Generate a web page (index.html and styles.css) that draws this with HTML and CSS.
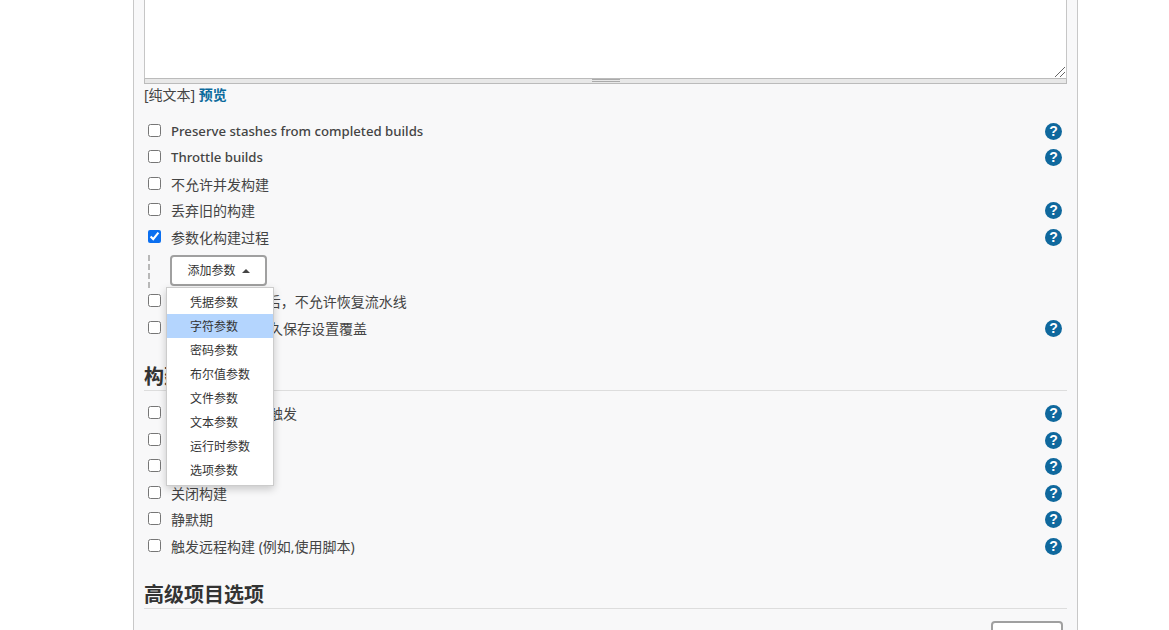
FILE: index.html
```
<!DOCTYPE html>
<html lang="zh-CN">
<head>
<meta charset="utf-8">
<title>配置</title>
<link rel="stylesheet" href="styles.css">
</head>
<body>
<main class="panel">
  <div class="editor">
    <div class="textarea"><svg class="grip" width="12" height="12" viewBox="0 0 12 12"><path d="M11 1 1 11M11 6 6 11" stroke="#666" fill="none"/></svg></div>
    <div class="drag"><span class="drag-handle"></span></div>
  </div>
  <p class="format">[纯文本] <a class="preview">预览</a></p>

  <div class="options">
    <label class="row"><input type="checkbox"><span class="label latin">Preserve stashes from completed builds</span><span class="help">?</span></label>
    <label class="row"><input type="checkbox"><span class="label latin">Throttle builds</span><span class="help">?</span></label>
    <label class="row"><input type="checkbox"><span class="label">不允许并发构建</span></label>
    <label class="row"><input type="checkbox"><span class="label">丢弃旧的构建</span><span class="help">?</span></label>
    <label class="row"><input type="checkbox" checked><span class="label">参数化构建过程</span><span class="help">?</span></label>
    <div class="nested">
      <div class="add-wrap">
        <button class="add-btn">添加参数 <span class="caret"></span></button>
        <ul class="menu">
          <li>凭据参数</li>
          <li class="active">字符参数</li>
          <li>密码参数</li>
          <li>布尔值参数</li>
          <li>文件参数</li>
          <li>文本参数</li>
          <li>运行时参数</li>
          <li>选项参数</li>
        </ul>
      </div>
    </div>
    <label class="row"><input type="checkbox"><span class="label">在 master 重启后，不允许恢复流水线</span></label>
    <label class="row"><input type="checkbox"><span class="label">流水线效率、持久保存设置覆盖</span><span class="help">?</span></label>
  </div>

  <h2 class="section first">构建触发器</h2>
  <div class="options after-section">
    <label class="row"><input type="checkbox"><span class="label">其他工程构建后触发</span><span class="help">?</span></label>
    <label class="row"><input type="checkbox"><span class="label">定时构建</span><span class="help">?</span></label>
    <label class="row"><input type="checkbox"><span class="label">轮询 SCM</span><span class="help">?</span></label>
    <label class="row"><input type="checkbox"><span class="label">关闭构建</span><span class="help">?</span></label>
    <label class="row"><input type="checkbox"><span class="label">静默期</span><span class="help">?</span></label>
    <label class="row"><input type="checkbox"><span class="label">触发远程构建 (例如,使用脚本)</span><span class="help">?</span></label>
  </div>

  <h2 class="section second">高级项目选项</h2>
  <div class="advanced"><button class="adv-btn">高级...</button></div>
</main>
</body>
</html>
```

FILE: styles.css
```
html, body {
  margin: 0;
  height: 630px;
  overflow: hidden;
  background: #fff;
}
body {
  font-family: "Noto Sans", "Noto Sans CJK SC", sans-serif;
  font-size: 14px;
  color: #333;
}
.panel {
  box-sizing: border-box;
  width: 945px;
  height: 630px;
  margin-left: 133px;
  padding: 0 10px;
  background: #f8f8f9;
  border-left: 1px solid #c8c8c8;
  border-right: 1px solid #c8c8c8;
  overflow: hidden;
}
.editor {
  width: 923px;
}
.textarea {
  box-sizing: border-box;
  height: 79px;
  background: #fff;
  border: 1px solid #c6c6c6;
  border-top: 0;
  border-bottom: 1px solid #bbb;
  display: flex;
  align-items: flex-end;
  justify-content: flex-end;
}
.grip {
  display: block;
}
.drag {
  box-sizing: border-box;
  height: 5px;
  background: #e8e8e8;
  border: 1px solid #bbb;
  border-top: 0;
  display: flex;
  justify-content: center;
}
.drag-handle {
  width: 28px;
  height: 3px;
  border-top: 1px solid #aaa;
  border-bottom: 1px solid #aaa;
  box-sizing: border-box;
}
.format {
  margin: 2px 0 0;
  line-height: 18px;
  height: 18px;
  color: #444;
}
.preview {
  font-weight: 700;
  color: #0b6a9c;
}
.options {
  display: flex;
  flex-direction: column;
}
.format + .options {
  margin-top: 13px;
}
.after-section {
  margin-top: 9px;
}
.row {
  display: flex;
  align-items: center;
  height: 26.5px;
}
.row input {
  width: 13px;
  height: 13px;
  margin: 0 10px 0 4px;
  accent-color: #0b6ff0;
  flex: none;
}
.label {
  flex: 1;
  white-space: nowrap;
  color: #444;
  padding-top: 1px;
}
.latin {
  font-size: 13.2px;
  font-weight: 500;
}
.help {
  flex: none;
  box-sizing: border-box;
  width: 17px;
  height: 17px;
  margin: 2px 5px 0 0;
  border-radius: 50%;
  background: #0f689d;
  color: #fff;
  font-family: "Liberation Sans", sans-serif;
  font-weight: 700;
  font-size: 14px;
  line-height: 17px;
  text-align: center;
}
.nested {
  margin: 5px 0 0 4px;
  padding-left: 20px;
  border-left: 2px dashed #b8b8b8;
  height: 33px;
}
.add-wrap {
  position: relative;
  width: 97px;
}
.add-btn {
  box-sizing: border-box;
  width: 97px;
  height: 31px;
  background: #fff;
  border: 2px solid #a0a0a0;
  border-radius: 4px;
  font: inherit;
  font-size: 12px;
  color: #333;
  padding: 0;
}
.caret {
  display: inline-block;
  width: 0;
  height: 0;
  margin-left: 3px;
  vertical-align: 2px;
  border-left: 4px solid transparent;
  border-right: 4px solid transparent;
  border-bottom: 4px solid #444;
}
.menu {
  position: absolute;
  z-index: 5;
  left: -4px;
  top: 32.5px;
  box-sizing: border-box;
  width: 108px;
  height: 199px;
  margin: 0;
  padding: 2px 0;
  list-style: none;
  background: #fff;
  border: 1px solid #ccc;
  box-shadow: 0 3px 8px rgba(0, 0, 0, 0.2);
}
.menu li {
  height: 24px;
  line-height: 26px;
  padding-left: 23px;
  font-size: 12px;
  color: #333;
}
.menu .active {
  background: #b4d5fe;
}
.section {
  margin: 0;
  padding-top: 5px;
  color: #333;
  font-size: 20px;
  font-weight: 700;
  line-height: 27px;
  border-bottom: 1px solid #ddd;
  width: 923px;
  box-sizing: border-box;
  height: 33px;
}
.first {
  margin-top: 17px;
}
.second {
  margin-top: 17px;
}
.advanced {
  display: flex;
  justify-content: flex-end;
  width: 919px;
  padding-top: 12px;
}
.adv-btn {
  box-sizing: border-box;
  width: 72px;
  height: 38px;
  background: #fff;
  border: 2px solid #a0a0a0;
  border-radius: 4px;
  font: inherit;
  color: #333;
  padding: 0;
}
```
